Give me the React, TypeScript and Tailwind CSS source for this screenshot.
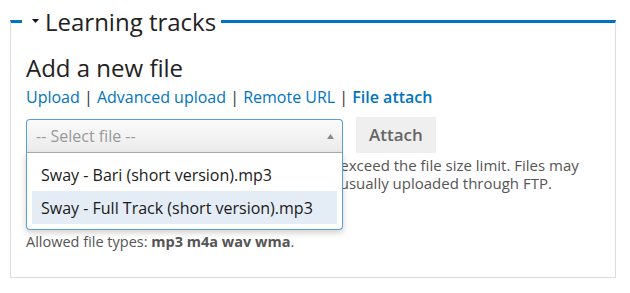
import React from "react";

const links = ["Upload", "Advanced upload", "Remote URL"];

const options = [
  "Sway - Bari (short version).mp3",
  "Sway - Full Track (short version).mp3",
];

export default function App() {
  return (
    <div
      className="min-h-screen bg-white pt-[5px] text-[#222]"
      style={{ fontFamily: '"Open Sans", "Noto Sans", sans-serif' }}
    >
      <fieldset className="ml-[10px] box-border h-[273px] w-[606px] border-x border-b border-t-[3px] border-[#ddd] border-t-[#0074bd] px-[15px]">
        <legend className="ml-[-4px] pl-[10px] pr-[5px]">
          <span className="inline-flex items-center gap-[6px] text-[24px] leading-[32px] text-[#222]">
            <svg width="7" height="4" viewBox="0 0 7 4" className="mt-[-2px]">
              <polygon points="0,0 7,0 3.5,4" fill="#111" />
            </svg>
            Learning tracks
          </span>
        </legend>

        {/* Add a new file */}
        <h2 className="mt-[14px] text-[24px] leading-[32px]">Add a new file</h2>
        <div className="mt-[2px] text-[16px] leading-[22px] text-[#333]">
          {links.map((l) => (
            <span key={l}>
              <a href="#" className="text-[#0074bd]">
                {l}
              </a>
              {" | "}
            </span>
          ))}
          <a href="#" className="font-semibold text-[#0074bd]">
            File attach
          </a>
        </div>

        {/* Select + button */}
        <div className="mt-[9px] flex items-start gap-[13px]">
          <div className="relative z-10 mt-[2px] w-[317px]">
            <div className="flex h-[33px] items-center justify-between rounded-t-[4px] border border-b-0 border-[#5e9ed6] bg-gradient-to-b from-[#fbfbfb] to-[#ebebeb] pl-[9px] pr-[8px] text-[16px] text-[#999]">
              <span>-- Select file --</span>
              <svg width="7" height="5" viewBox="0 0 7 5">
                <polygon points="0,5 7,5 3.5,0" fill="#8a8a8a" />
              </svg>
            </div>
            <div className="absolute left-0 right-0 top-full rounded-b-[4px] border border-t-0 border-[#5e9ed6] bg-white shadow-[0_3px_6px_rgba(0,0,0,0.18)]">
              <div className="border-t border-[#a8a8a8] p-[5px]">
                {options.map((o, i) => (
                  <div
                    key={o}
                    className={
                      "flex h-[33px] items-center pl-[9px] text-[16px] text-[#1a1a1a] " +
                      (i === 1 ? "bg-[#e4ecf5]" : "")
                    }
                  >
                    {o}
                  </div>
                ))}
              </div>
            </div>
          </div>
          <button className="h-[36px] bg-[#efefef] px-[13px] text-[17px] font-semibold text-[#666]">
            Attach
          </button>
        </div>

        {/* Description */}
        <p className="mt-[3px] text-[15px] leading-[18px] text-[#555]">
          This method may be used to attach files that exceed the file size limit. Files may
          <br />
          be attached from the site's upload directory, usually uploaded through FTP.
        </p>
        <p className="mt-[41px] text-[14.5px] leading-[18px] text-[#555]">
          Allowed file types: <strong className="font-bold">mp3 m4a wav wma</strong>.
        </p>
      </fieldset>
    </div>
  );
}
